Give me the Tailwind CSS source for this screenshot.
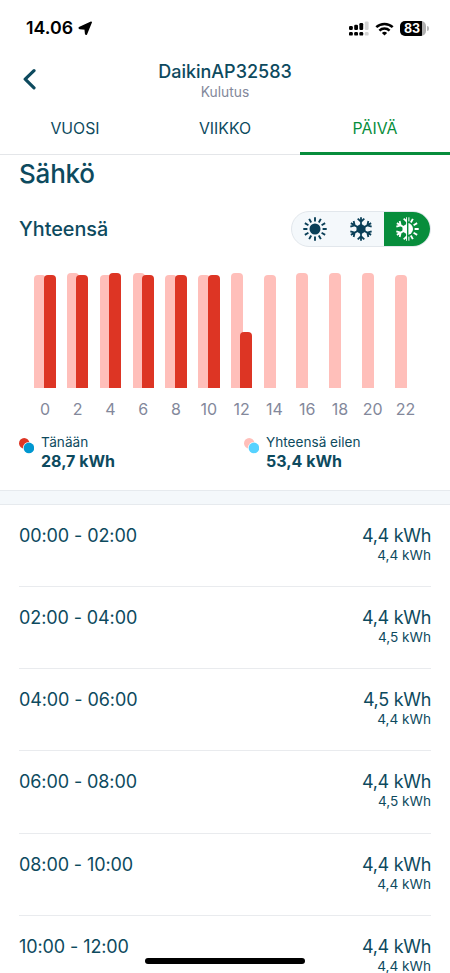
<!DOCTYPE html>
<html lang="fi">
<head>
  <meta charset="UTF-8" />
  <meta name="viewport" content="width=device-width, initial-scale=1.0"/>
  <title>Kulutus</title>
  <script src="https://cdn.jsdelivr.net/npm/@tailwindcss/browser@4"></script>
</head>
<body class="bg-white font-['Inter',sans-serif] text-[#0d4a5e] h-[973px] overflow-hidden relative">
  <!-- status bar -->
  <div class="h-[52px] pt-[5px] pl-[26px] pr-[22px] flex items-center justify-between text-black">
    <div class="flex items-center gap-[5px]">
      <span class="text-[17.8px] font-semibold">14.06</span>
      <svg width="15" height="15" viewBox="0 0 15 15"><path d="M13.2 1.3 L8.5 12.8 Q7.9 13.8 7.7 12.7 L7.2 7.9 L1.9 7.5 Q0.7 7 1.8 6.4 Z" fill="#000" stroke="#000" stroke-width="1.6" stroke-linejoin="round"/></svg>
    </div>
    <div class="flex items-center gap-[6px]">
      <svg width="20" height="15" viewBox="0 0 20 15">
        <g fill="#000">
          <rect x="0" y="5" width="3.8" height="4" rx="1.2"/><rect x="5.2" y="3.7" width="3.8" height="5.3" rx="1.2"/><rect x="10.4" y="2" width="3.8" height="7" rx="1.2"/>
          <rect x="0" y="11" width="3.8" height="3.6" rx="1.2"/><rect x="5.2" y="11" width="3.8" height="3.6" rx="1.2"/><rect x="10.4" y="11" width="3.8" height="3.6" rx="1.2"/>
        </g>
        <g fill="#d4d4d4"><rect x="15.8" y="0.4" width="3.8" height="8.6" rx="1.2"/><rect x="15.8" y="11" width="3.8" height="3.6" rx="1.2"/></g>
      </svg>
      <svg width="19" height="14" viewBox="0 0 19 14" fill="none" stroke="#000" stroke-width="2.5">
        <path d="M1.3 5.2 A11.8 11.8 0 0 1 17.7 5.2"/>
        <path d="M4.4 8.6 A7.4 7.4 0 0 1 14.6 8.6"/>
        <path d="M9.5 13.6 L6.9 11 A3.8 3.8 0 0 1 12.1 11 Z" fill="#000" stroke="none"/>
      </svg>
      <div class="flex items-center gap-px">
        <div class="w-[26px] h-[15px] rounded-[5px] bg-linear-to-r from-black from-[84%] to-[#b0b0b0] to-[84%] text-white text-[12.5px] leading-[15px] font-bold text-center pr-[2px]">83</div>
        <div class="w-[2px] h-[5px] rounded-r-full bg-[#b8b8b8] -mr-px"></div>
      </div>
    </div>
  </div>

  <!-- header -->
  <div class="h-[51px] px-[22px] grid grid-cols-[40px_1fr_40px] items-start">
    <svg class="mt-[16px]" width="15" height="22" viewBox="0 0 15 22"><path d="M12 2.7 L3.2 11.2 L12 19.8" fill="none" stroke="#0d4a5e" stroke-width="3.2" stroke-linecap="round" stroke-linejoin="round"/></svg>
    <div class="text-center pt-[9px]">
      <h1 class="text-[18px] leading-[22px] font-medium">DaikinAP32583</h1>
      <p class="text-[13.8px] leading-[18px] text-[#83889b]">Kulutus</p>
    </div>
  </div>

  <!-- tabs -->
  <div class="h-[52px] grid grid-cols-3 text-center text-[15.8px] leading-[51px] border-b border-[#e4e6e9]">
    <div>VUOSI</div>
    <div>VIIKKO</div>
    <div class="text-[#078d3c] border-b-[3px] border-[#078d3c] h-[52px]">PÄIVÄ</div>
  </div>

  <div class="h-[335px] px-[19px]">
    <h2 class="text-[26px] leading-[38px] font-medium tracking-[-0.2px]">Sähkö</h2>
    <div class="mt-[18px] flex items-center justify-between">
      <h3 class="pt-px text-[19.8px] font-medium">Yhteensä</h3>
      <div class="flex w-[140px] h-[36px] rounded-full border border-[#e2e7ec] bg-[#f4f8fb] overflow-hidden text-[#0a3f58]">
        <div class="w-[46px] flex items-center justify-center">
          <svg width="24" height="24" viewBox="-12 -12 24 24">
            <circle r="5.5" fill="currentColor"/>
            <g id="rays" stroke="currentColor" stroke-width="1.9">
              <path id="ray" d="M0 -7.6V-11.7"/>
              <use href="#ray" transform="rotate(30)"/><use href="#ray" transform="rotate(60)"/><use href="#ray" transform="rotate(90)"/>
              <use href="#ray" transform="rotate(120)"/><use href="#ray" transform="rotate(150)"/><use href="#ray" transform="rotate(180)"/>
              <use href="#ray" transform="rotate(210)"/><use href="#ray" transform="rotate(240)"/><use href="#ray" transform="rotate(270)"/>
              <use href="#ray" transform="rotate(300)"/><use href="#ray" transform="rotate(330)"/>
            </g>
          </svg>
        </div>
        <div class="w-[46px] flex items-center justify-center">
          <svg width="24" height="24" viewBox="-12 -12 24 24">
            <g id="flake">
              <path d="M0 -5.2L4.5 -2.6V2.6L0 5.2L-4.5 2.6V-2.6Z" fill="currentColor"/>
              <g stroke="currentColor" stroke-width="1.8" fill="none">
                <path id="arm" d="M0 0V-11.7M-3.3 -10.4L0 -7.3L3.3 -10.4"/>
                <use href="#arm" transform="rotate(60)"/><use href="#arm" transform="rotate(120)"/><use href="#arm" transform="rotate(180)"/>
                <use href="#arm" transform="rotate(240)"/><use href="#arm" transform="rotate(300)"/>
              </g>
            </g>
          </svg>
        </div>
        <div class="flex-1 bg-[#078d3c] text-white flex items-center justify-center">
          <svg width="24" height="24" viewBox="-12 -12 24 24">
            <clipPath id="left"><rect x="-12" y="-12" width="12" height="24"/></clipPath>
            <clipPath id="right"><rect x="1.4" y="-12" width="11" height="24"/></clipPath>
            <g clip-path="url(#left)"><use href="#flake"/></g>
            <g clip-path="url(#right)"><circle r="6" fill="currentColor"/><use href="#rays"/></g>
            <path d="M1.9 -11.7V-7.6M1.9 7.6V11.7" stroke="currentColor" stroke-width="1"/>
          </svg>
        </div>
      </div>
    </div>

    <div id="chart" class="mt-[21px] ml-[9.6px] w-[393.2px] grid grid-cols-12"></div>

    <!-- legend -->
    <div class="mt-[16px] grid grid-cols-[225px_1fr]">
      <div class="flex gap-[7px]">
        <svg class="mt-[4px]" width="15" height="16" viewBox="0 0 15 16"><circle cx="5.2" cy="5.2" r="5.2" fill="#dd3524"/><circle cx="9.8" cy="9.9" r="5.9" fill="#fff"/><circle cx="9.9" cy="9.9" r="5.3" fill="#0097d0"/></svg>
        <div>
          <p class="text-[13.6px] leading-[17px]">Tänään</p>
          <p class="text-[16px] leading-[20px] font-bold">28,7 kWh</p>
        </div>
      </div>
      <div class="flex gap-[7px]">
        <svg class="mt-[4px]" width="15" height="16" viewBox="0 0 15 16"><circle cx="5.2" cy="5.2" r="5.2" fill="#ffbfba"/><circle cx="9.8" cy="9.9" r="5.9" fill="#fff"/><circle cx="9.9" cy="9.9" r="5.3" fill="#56d2ff"/></svg>
        <div>
          <p class="text-[13.6px] leading-[17px]">Yhteensä eilen</p>
          <p class="text-[16px] leading-[20px] font-bold">53,4 kWh</p>
        </div>
      </div>
    </div>
  </div>

  <div class="h-[14.5px] bg-[#f4f8fb] border-y border-[#e6eaee]"></div>

  <div id="rows" class="px-[19px]"></div>

  <!-- home indicator -->
  <div class="absolute left-[145px] top-[958px] w-[160px] h-[6px] rounded-full bg-black"></div>

  <script>
    const today = [4.4, 4.4, 4.5, 4.4, 4.4, 4.4, 2.2];
    const yesterday = [4.4, 4.5, 4.4, 4.5, 4.4, 4.4, 4.5, 4.4, 4.5, 4.5, 4.5, 4.4];
    const PX_PER_KWH = 25.6;

    document.getElementById('chart').innerHTML = yesterday.map((y, i) => `
      <div>
        <div class="h-[120px] flex items-end justify-center">
          <div class="w-[12px] rounded-t-[4px] bg-[#ffbfba]" style="height:${y * PX_PER_KWH}px"></div>
          <div class="w-[12px] -ml-[2.6px] rounded-t-[4px] ${today[i] ? 'bg-[#dd3524]' : ''}" style="height:${(today[i] || 0) * PX_PER_KWH}px"></div>
        </div>
        <p class="mt-[12px] text-center text-[16px] leading-[18px] text-[#83889b]">${i * 2}</p>
      </div>
    `).join('');

    const kwh = n => n.toFixed(1).replace('.', ',') + ' kWh';
    const hour = n => String(n).padStart(2, '0') + ':00';

    document.getElementById('rows').innerHTML = today.slice(0, 6).map((t, i) => `
      <div class="h-[82.25px] pt-[20px] flex justify-between border-b border-[#e9ebee]">
        <p class="text-[18px] leading-[22px] tracking-[-0.1px]">${hour(i * 2)} - ${hour(i * 2 + 2)}</p>
        <div class="text-right">
          <p class="text-[18px] leading-[22px] tracking-[-0.3px]">${kwh(t)}</p>
          <p class="text-[13.6px] leading-[16px]">${kwh(yesterday[i])}</p>
        </div>
      </div>
    `).join('');
  </script>
</body>
</html>
